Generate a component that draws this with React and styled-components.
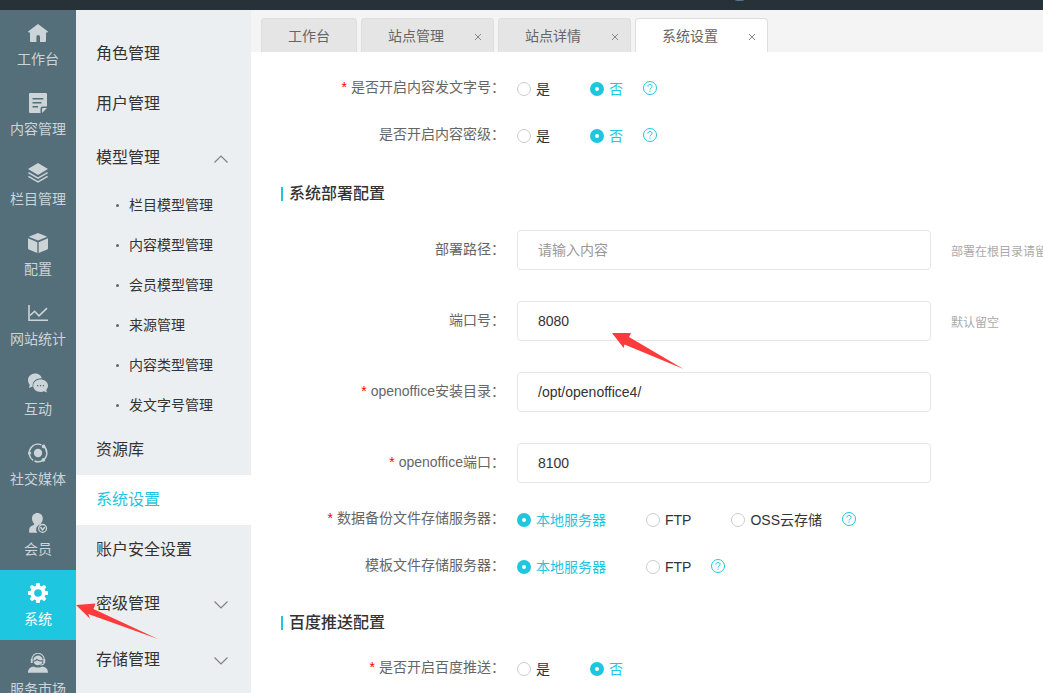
import * as React from "react"
import styled, { createGlobalStyle, css } from "styled-components"

const accent = "#1fc6e0"

const GlobalStyle = createGlobalStyle`
  * {
    box-sizing: border-box;
  }
  body {
    margin: 0;
    color: #333;
    background: white;
    font-family: "Liberation Sans", "Noto Sans CJK SC", sans-serif;
    font-size: 14px;
  }
  button, input {
    font-family: inherit;
  }
`

const railItems = [
  { title: "工作台", icon: "home" },
  { title: "内容管理", icon: "note" },
  { title: "栏目管理", icon: "layers" },
  { title: "配置", icon: "cube" },
  { title: "网站统计", icon: "chart" },
  { title: "互动", icon: "chat" },
  { title: "社交媒体", icon: "social" },
  { title: "会员", icon: "member" },
  { title: "系统", icon: "gear", active: true },
  { title: "服务市场", icon: "service" },
]

const menuItems = [
  { title: "角色管理" },
  { title: "用户管理" },
  {
    title: "模型管理",
    group: true,
    children: [
      "栏目模型管理",
      "内容模型管理",
      "会员模型管理",
      "来源管理",
      "内容类型管理",
      "发文字号管理",
    ],
  },
  { title: "资源库" },
  { title: "系统设置", active: true },
  { title: "账户安全设置" },
  { title: "密级管理", group: true },
  { title: "存储管理", group: true },
]

const tabs = [
  { title: "工作台" },
  { title: "站点管理", closable: true },
  { title: "站点详情", closable: true },
  { title: "系统设置", closable: true, active: true },
]

const icons = {
  home: (
    <path d="M10 1 20 8.6l-.6.9H18V18a1 1 0 0 1-1 1h-5v-5.200a1.800 1.800 0 0 0-3.600 0V19H3a1 1 0 0 1-1-1V9.500H.6L0 8.600z" />
  ),
  note: (
    <path
      fillRule="evenodd"
      d="M2 0h16a1 1 0 0 1 1 1v12.500h-4.500a2 2 0 0 0-2 2V20H2a1 1 0 0 1-1-1V1a1 1 0 0 1 1-1zm2.500 5v1.600h10.800V5zm0 4v1.600h9V9zm0 4v1.600h5.500V13zM14 20v-4a1 1 0 0 1 1-1h4z"
    />
  ),
  layers: (
    <>
      <path d="m10 0 10 6-10 6L0 6z" />
      <path
        d="m.4 9.600 9.600 5.600 9.600-5.600M.4 13.400 10 19l9.600-5.600"
        fill="none"
        stroke="currentColor"
        strokeWidth="1.500"
      />
    </>
  ),
  cube: (
    <path d="m10 0 9.200 3.700L10 7.600.8 3.700zM0 5.200l9.300 4V20L.8 16.400a1.200 1.200 0 0 1-.8-1.100zM20 5.200l-9.300 4V20l8.500-3.600a1.200 1.200 0 0 0 .8-1.100z" />
  ),
  chart: (
    <path
      d="M1 2v15.200h19M2 12.500l4.600-4.200L11 12.800l8-7.600"
      fill="none"
      stroke="currentColor"
      strokeWidth="1.600"
    />
  ),
  chat: (
    <>
      <path d="M7 .5c3.400 0 6.200 2 6.800 4.700C8.800 4.800 4.600 8 4.600 12.200c0 .4 0 .8.1 1.200L1 15l.7-3.200A6.300 6.300 0 0 1 0 7.200C0 3.500 3.100.5 7 .5z" />
      <path
        fillRule="evenodd"
        d="M12.600 6.600c4.200 0 7.400 2.700 7.400 6.100 0 1.700-.7 3.100-1.800 4.200l.8 2.600-3-1.200c-1 .4-2.200.6-3.400.6-4.200 0-7.400-2.700-7.400-6.200s3.200-6.100 7.400-6.100zM9 12v1.300h1.300V12zm2.900 0v1.300h1.300V12zm2.900 0v1.300h1.300V12z"
      />
    </>
  ),
  social: (
    <>
      <circle cx="10" cy="10" r="4.200" />
      <path
        d="M5.200 17.400A8.800 8.800 0 0 1 3 4.700 8.800 8.800 0 0 1 13.500 1.900M15.600 3.200A8.800 8.800 0 0 1 14.800 17.400 8.800 8.800 0 0 1 6.500 18"
        fill="none"
        stroke="currentColor"
        strokeWidth="1.500"
      />
      <circle cx="15.600" cy="3.400" r="1.800" />
      <circle cx="1.600" cy="10" r="1.600" />
      <circle cx="15.400" cy="16.900" r="1.800" />
    </>
  ),
  member: (
    <>
      <path d="M9.400 0c3.200 0 5.400 2.300 5.400 5.500 0 2-.8 3.900-2.100 5 .2.400.6.600 1 .8A5.200 5.200 0 0 0 9.300 19.700H1.300c-.5-4.400.4-6.300 3.700-7.500 1.200-.4 1.500-1 1-1.700C4.800 9.400 4 7.500 4 5.500 4 2.300 6.200 0 9.400 0z" />
      <circle
        cx="14.600"
        cy="15.400"
        r="3.900"
        fill="none"
        stroke="currentColor"
        strokeWidth="1.300"
      />
      <path
        d="m12.500 14 2 3 2.300-3"
        fill="none"
        stroke="currentColor"
        strokeWidth="1.400"
      />
    </>
  ),
  gear: (
    <path
      fillRule="evenodd"
      d="M8.300 0h3.400l.5 2.800 1.400.6L16 1.700 18.300 4l-1.700 2.400.6 1.400 2.800.5v3.400l-2.800.5-.6 1.400 1.700 2.400-2.300 2.300-2.400-1.700-1.400.6-.5 2.800H8.300l-.5-2.800-1.400-.6L4 18.300 1.700 16l1.700-2.400-.6-1.400-2.800-.5V8.300l2.800-.5.6-1.400L1.700 4 4 1.700l2.400 1.700 1.400-.6zM10 6.200a3.800 3.800 0 1 0 0 7.600 3.800 3.800 0 0 0 0-7.600z"
    />
  ),
  service: (
    <>
      <path d="M10 2.600a4.800 4.800 0 0 1 4.800 4.600c-3.400.3-5-.4-6-1.700-.6 1.300-1.800 2-3.500 2.100A4.800 4.800 0 0 1 10 2.600zM5.500 8.700c1.600-.1 2.700-.6 3.500-1.400 1.300 1 3.100 1.300 5.600 1.200a4.700 4.700 0 0 1-9.100.2zM0 19.800c0-4 2.600-5.800 6-6.200 1.200 1.300 6.800 1.300 8 0 3.400.4 6 2.200 6 6.200z" />
      <path
        d="M3.800 9V6.500a6.200 6.200 0 0 1 12.400 0V9c0 2-1.600 3-3.800 3"
        fill="none"
        stroke="currentColor"
        strokeWidth="1.100"
      />
      <path d="M2.800 6h1.800v4H2.800zM15.400 6h1.800v4h-1.800z" />
    </>
  ),
}

function Chevron({ open }) {
  return (
    <ChevronIcon width="14" height="8" viewBox="0 0 14 8" aria-hidden="true">
      <path
        d={open ? "M.5 7.500 7 1l6.500 6.500" : "M.5.5 7 7 13.500.5"}
        fill="none"
        stroke="#808080"
        strokeWidth="1.200"
      />
    </ChevronIcon>
  )
}

function Help() {
  return (
    <HelpButton type="button" aria-label="帮助">
      <svg width="14" height="14" viewBox="0 0 14 14">
        <g fill="none" stroke="currentColor">
          <circle cx="7" cy="7" r="6.500" />
          <path d="M4.900 5.600c0-1.400.9-2.200 2.100-2.200s2.100.8 2.100 1.900c0 1.500-2.100 1.600-2.100 3.200M7 9.600v1.200" />
        </g>
      </svg>
    </HelpButton>
  )
}

function RadioField({ name, label, required, options, value, help }) {
  const [selected, setSelected] = React.useState(value)
  return (
    <Field role="radiogroup" aria-labelledby={name}>
      <Label as="span" id={name}>
        {required && <Star>*</Star>}
        {label}：
      </Label>
      <Options>
        {options.map(option => (
          <Option key={option} $checked={option === selected}>
            <Radio
              type="radio"
              name={name}
              checked={option === selected}
              onChange={() => setSelected(option)}
            />
            {option}
          </Option>
        ))}
      </Options>
      {help && <Help />}
    </Field>
  )
}

function TextField({ name, label, required, value, hint }) {
  return (
    <Field>
      <Label htmlFor={name}>
        {required && <Star>*</Star>}
        {label}：
      </Label>
      <TextInput id={name} defaultValue={value} placeholder="请输入内容" />
      {hint && <Hint>{hint}</Hint>}
    </Field>
  )
}

export default function App() {
  return (
    <Page>
      <GlobalStyle />
      <TopBar>
        <svg width="9" height="1" viewBox="0 0 9 1" aria-hidden="true">
          <ellipse cx="4.500" cy="0" rx="4.500" ry="1" fill="#54788c" />
        </svg>
      </TopBar>
      <Body>
        <Rail>
          {railItems.map(item => (
            <RailLink key={item.title} href="#" $active={item.active}>
              <svg
                width="20"
                height="20"
                viewBox="0 0 20 20"
                fill="currentColor"
                aria-hidden="true"
              >
                {icons[item.icon]}
              </svg>
              {item.title}
            </RailLink>
          ))}
        </Rail>
        <Menu>
          {menuItems.map(item => (
            <React.Fragment key={item.title}>
              {item.group ? (
                <MenuGroup type="button" aria-expanded={!!item.children}>
                  {item.title}
                  <Chevron open={!!item.children} />
                </MenuGroup>
              ) : (
                <MenuLink href="#" $active={item.active}>
                  {item.title}
                </MenuLink>
              )}
              {item.children &&
                item.children.map(child => (
                  <SubLink key={child} href="#">
                    {child}
                  </SubLink>
                ))}
            </React.Fragment>
          ))}
        </Menu>
        <Main>
          <TabBar>
            {tabs.map(tab => (
              <Tab key={tab.title} $active={tab.active}>
                <TabTitle type="button">{tab.title}</TabTitle>
                {tab.closable && (
                  <CloseButton type="button" aria-label="关闭">
                    <svg width="8" height="8" viewBox="0 0 8 8">
                      <path d="m1 1 6 6m0-6-6 6" stroke="#888" />
                    </svg>
                  </CloseButton>
                )}
              </Tab>
            ))}
          </TabBar>
          <Form>
            <Fields $gap={25} $bottom={2}>
              <RadioField
                name="docNumber"
                label="是否开启内容发文字号"
                required
                options={["是", "否"]}
                value="否"
                help
              />
              <RadioField
                name="secretLevel"
                label="是否开启内容密级"
                options={["是", "否"]}
                value="否"
                help
              />
            </Fields>
            <Heading>系统部署配置</Heading>
            <Fields $gap={31} $top={2} $bottom={25}>
              <TextField
                name="deployPath"
                label="部署路径"
                hint="部署在根目录请留空"
              />
              <TextField
                name="port"
                label="端口号"
                value="8080"
                hint="默认留空"
              />
              <TextField
                name="officeHome"
                label="openoffice安装目录"
                required
                value="/opt/openoffice4/"
              />
              <TextField
                name="officePort"
                label="openoffice端口"
                required
                value="8100"
              />
            </Fields>
            <Fields $gap={25}>
              <RadioField
                name="backupServer"
                label="数据备份文件存储服务器"
                required
                options={["本地服务器", "FTP", "OSS云存储"]}
                value="本地服务器"
                help
              />
              <RadioField
                name="templateServer"
                label="模板文件存储服务器"
                options={["本地服务器", "FTP"]}
                value="本地服务器"
                help
              />
            </Fields>
            <Heading>百度推送配置</Heading>
            <Fields $gap={25}>
              <RadioField
                name="baiduPush"
                label="是否开启百度推送"
                required
                options={["是", "否"]}
                value="否"
              />
            </Fields>
          </Form>
        </Main>
      </Body>
      <Pointer $left={76} $top={603} width="83" height="37" viewBox="0 0 83 37">
        <path d="M0 2 19.500.5 17.500 6 82 36 12.300 11 14 15.700z" />
      </Pointer>
      <Pointer $left={612} $top={333} width="72" height="37" viewBox="0 0 72 37">
        <path d="M0 0h19L17 4 71.500 36 12.500 11.500 11.700 15z" />
      </Pointer>
    </Page>
  )
}

const Page = styled.div`
  position: relative;
  display: flex;
  flex-direction: column;
  height: 100vh;
  overflow: hidden;
`

const TopBar = styled.header`
  display: flex;
  flex: none;
  height: 10px;
  padding-left: 735px;
  background: #263238;
`

const Body = styled.div`
  display: flex;
  flex: 1;
  min-height: 0;
`

const Rail = styled.nav`
  flex: none;
  width: 76px;
  overflow: hidden;
  background: #546e7a;
`

const RailLink = styled.a`
  display: flex;
  flex-direction: column;
  align-items: center;
  gap: 6px;
  height: 70px;
  padding-top: 13px;
  line-height: 20px;
  color: ${props => (props.$active ? "white" : "#ccd4d7")};
  background: ${props => (props.$active ? accent : "transparent")};
  text-decoration: none;
`

const Menu = styled.nav`
  flex: none;
  width: 175px;
  padding-top: 19px;
  overflow: hidden;
  background: #eceff1;
`

const menuRow = css`
  display: flex;
  align-items: center;
  width: 100%;
  padding: 0 23px 2px 20px;
  font-size: 16px;
  color: #333;
  text-decoration: none;
`

const MenuLink = styled.a`
  ${menuRow}
  height: 50px;
  padding-bottom: 4px;
  ${props =>
    props.$active &&
    css`
      color: ${accent};
      background: white;
    `}
`

const MenuGroup = styled.button`
  ${menuRow}
  justify-content: space-between;
  height: 56px;
  border: 0;
  background: none;
`

const ChevronIcon = styled.svg`
  margin-top: 6px;
`

const SubLink = styled.a`
  ${menuRow}
  gap: 10px;
  height: 40px;
  padding-left: 40px;
  font-size: 14px;
  &::before {
    content: "";
    width: 3px;
    height: 3px;
    margin-top: 2px;
    border-radius: 50%;
    background: #666;
  }
`

const Main = styled.main`
  flex: 1;
  min-width: 0;
  overflow: hidden;
`

const TabBar = styled.div`
  display: flex;
  align-items: flex-end;
  gap: 4px;
  height: 42px;
  padding-left: 10px;
  background: #f4f4f4;
`

const Tab = styled.div`
  display: flex;
  align-items: center;
  height: 34px;
  padding: 0 11px 2px 26px;
  border: 1px solid #dedede;
  border-bottom: 0;
  border-radius: 4px 4px 0 0;
  background: ${props => (props.$active ? "white" : "#e5e5e5")};
`

const TabTitle = styled.button`
  padding: 0;
  border: 0;
  background: none;
  font-size: 14px;
  color: #666;
  &:only-child {
    margin-right: 15px;
  }
`

const CloseButton = styled.button`
  display: flex;
  margin-left: 30px;
  padding: 4px 0 0;
  border: 0;
  background: none;
`

const Form = styled.form`
  padding-top: 25px;
`

const Fields = styled.div`
  display: flex;
  flex-direction: column;
  gap: ${props => props.$gap}px;
  padding-top: ${props => props.$top || 0}px;
  padding-bottom: ${props => props.$bottom || 0}px;
`

const Field = styled.div`
  display: flex;
  align-items: center;
  min-height: 22px;
  white-space: nowrap;
`

const Label = styled.label`
  flex: none;
  width: 254px;
  margin-right: 12px;
  padding-bottom: 2px;
  line-height: 20px;
  text-align: right;
  color: #666;
`

const Star = styled.span`
  margin-right: 4px;
  color: #f00;
`

const Options = styled.div`
  display: flex;
  gap: 40px;
  margin-right: 20px;
`

const Option = styled.label`
  display: flex;
  align-items: center;
  gap: 5px;
  padding-top: 2px;
  line-height: 20px;
  color: ${props => (props.$checked ? accent : "#333")};
`

const Radio = styled.input`
  appearance: none;
  width: 14px;
  height: 14px;
  margin: 0;
  border: 1px solid #ccc;
  border-radius: 50%;
  background: white;
  &:checked {
    border: 5px solid ${accent};
  }
`

const HelpButton = styled.button`
  display: flex;
  padding: 0;
  border: 0;
  background: none;
  color: ${accent};
`

const TextInput = styled.input`
  flex: none;
  width: 414px;
  height: 40px;
  padding: 0 20px;
  border: 1px solid #e6e6e6;
  border-radius: 4px;
  font-size: 14px;
  color: #333;
  &::placeholder {
    color: #999;
  }
`

const Hint = styled.span`
  margin-left: 20px;
  font-size: 12px;
  color: #aaa;
`

const Heading = styled.h2`
  display: flex;
  align-items: center;
  gap: 6px;
  margin: 34px 0 22px 30px;
  font-size: 16px;
  font-weight: 500;
  line-height: 24px;
  color: #333;
  &::before {
    content: "";
    width: 2px;
    height: 14px;
    background: ${accent};
  }
`

// red arrows drawn over the page
const Pointer = styled.svg`
  position: absolute;
  left: ${props => props.$left}px;
  top: ${props => props.$top}px;
  fill: #fd3b3a;
  pointer-events: none;
`
